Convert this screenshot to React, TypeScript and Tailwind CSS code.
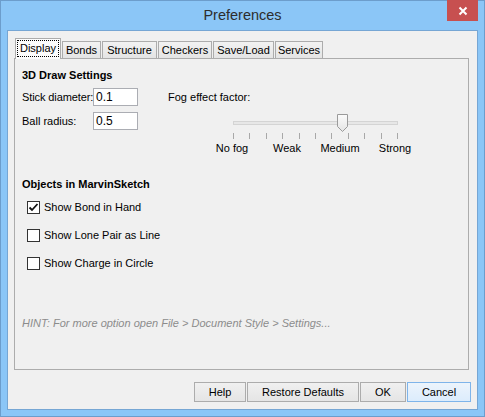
import React from 'react';

const font = { fontFamily: '"Liberation Sans", Arial, sans-serif' };

const tabs = [
  { label: 'Display', w: 'w-[46px]' },
  { label: 'Bonds', w: 'w-[39px]' },
  { label: 'Structure', w: 'w-[55px]' },
  { label: 'Checkers', w: 'w-[54px]' },
  { label: 'Save/Load', w: 'w-[61px]' },
  { label: 'Services', w: 'w-[48px]' },
];

const checks = [
  { label: 'Show Bond in Hand', on: true },
  { label: 'Show Lone Pair as Line', on: false },
  { label: 'Show Charge in Circle', on: false },
];

function FogSlider() {
  const ticks = Array.from({ length: 11 }, (_, i) => 33 + i * 16.4);
  return (
    <div className="relative ml-[32px] h-[50px] w-[220px]">
      <svg width="220" height="36" className="block">
        <rect x="33.5" y="15.5" width="164" height="3" fill="#e7e7e7" stroke="#d4d4d4" />
        {ticks.map((x) => (
          <line key={x} x1={Math.round(x) + 0.5} y1="27" x2={Math.round(x) + 0.5} y2="33" stroke="#a8a8a8" />
        ))}
        <defs>
          <linearGradient id="thumb" x1="0" y1="0" x2="0" y2="1">
            <stop offset="0" stopColor="#fbfbfb" />
            <stop offset="1" stopColor="#e4e4e4" />
          </linearGradient>
        </defs>
        <path d="M137.5 8.5 H147.5 V20.5 L142.5 25.5 L137.5 20.5 Z" fill="url(#thumb)" stroke="#9a9a9a" />
      </svg>
      <div className="absolute left-0 top-[35px] h-[14px] w-full text-[11px] leading-[14px] text-black">
        <span className="absolute -translate-x-1/2" style={{ left: 32 }}>No fog</span>
        <span className="absolute -translate-x-1/2" style={{ left: 87 }}>Weak</span>
        <span className="absolute -translate-x-1/2" style={{ left: 140 }}>Medium</span>
        <span className="absolute -translate-x-1/2" style={{ left: 195 }}>Strong</span>
      </div>
    </div>
  );
}

function Checkbox({ on }: { on: boolean }) {
  return (
    <span className="flex h-[13px] w-[13px] items-center justify-center border border-[#333333] bg-white">
      {on && (
        <svg width="11" height="11" viewBox="0 0 11 11">
          <path d="M1.5 5.5 L4 8 L9.5 2" fill="none" stroke="#111" strokeWidth="1.8" />
        </svg>
      )}
    </span>
  );
}

export default function App() {
  return (
    <div
      className="flex h-[417px] w-[485px] flex-col border border-[#6c9dcc] bg-[#8bc6f7] px-[6px] pb-[6px]"
      style={font}
    >
      <div className="relative h-[29px] shrink-0">
        <div className="pt-[5px] text-center text-[14.5px] leading-[18px] text-[#2d2d2d]">Preferences</div>
        <div className="absolute right-0 top-[-1px] flex h-[21px] w-[31px] items-center justify-center bg-[#c75050]">
          <svg width="10" height="10" viewBox="0 0 10 10">
            <path d="M1.5 1.5 L8.5 8.5 M8.5 1.5 L1.5 8.5" stroke="#fff" strokeWidth="2" />
          </svg>
        </div>
      </div>

      <div className="flex flex-1 flex-col border border-[#76a6d4] bg-[#f0f0f0] pl-[6px] pr-[8px] pt-[7px]">
        <div className="flex h-[20px] items-end gap-px pl-px text-[11px] text-black">
          {tabs.map((t, i) =>
            i === 0 ? (
              <div
                key={t.label}
                className={`${t.w} relative z-10 -mb-px flex h-[21px] items-center justify-center border border-b-0 border-[#acacac] bg-[#fcfcfc] pb-[1px]`}
              >
                <span className="border border-dotted border-black px-[2px] leading-[15px]">{t.label}</span>
              </div>
            ) : (
              <div
                key={t.label}
                className={`${t.w} flex h-[17px] items-center justify-center border border-b-0 border-[#acacac] bg-gradient-to-b from-[#f2f2f2] to-[#e4e4e4] leading-[15px]`}
              >
                {t.label}
              </div>
            ),
          )}
        </div>

        <div className="h-[312px] border border-[#acacac] bg-[#f0f0f0] px-[7px] pt-[9px] text-[11px] text-black">
          <div className="h-[14px] font-bold leading-[14px]">3D Draw Settings</div>

          <div className="mt-[6px] flex">
            <div className="flex flex-col gap-[6px]">
              <div className="flex h-[18px] items-center">
                <span className="w-[71px] shrink-0 whitespace-nowrap tracking-[-0.1px]">Stick diameter:</span>
                <span className="flex h-[18px] w-[45px] items-center border border-[#abadb3] bg-white pl-[2px] text-[12px]">0.1</span>
              </div>
              <div className="flex h-[18px] items-center">
                <span className="w-[71px] shrink-0 whitespace-nowrap">Ball radius:</span>
                <span className="flex h-[18px] w-[45px] items-center border border-[#abadb3] bg-white pl-[2px] text-[12px]">0.5</span>
              </div>
            </div>
            <div className="ml-[30px] flex flex-col">
              <div className="flex h-[18px] items-center whitespace-nowrap">Fog effect factor:</div>
              <FogSlider />
            </div>
          </div>

          <div className="mt-[21px] h-[14px] font-bold leading-[14px]">Objects in MarvinSketch</div>
          <div className="mt-[2px] flex flex-col">
            {checks.map((c) => (
              <div key={c.label} className="flex h-[28px] items-center gap-[4px] pl-[5px]">
                <Checkbox on={c.on} />
                <span>{c.label}</span>
              </div>
            ))}
          </div>

          <div className="mt-[39px] h-[14px] italic leading-[14px] text-[#8c8c8c]">
            HINT: For more option open File &gt; Document Style &gt; Settings...
          </div>
        </div>

        <div className="-mr-[2px] mt-[12px] flex justify-end gap-px text-[11px] text-black">
          <button className="h-[20px] w-[52px] border border-[#acacac] bg-gradient-to-b from-[#f0f0f0] to-[#e5e5e5]">Help</button>
          <button className="h-[20px] w-[112px] border border-[#acacac] bg-gradient-to-b from-[#f0f0f0] to-[#e5e5e5]">Restore Defaults</button>
          <button className="h-[20px] w-[46px] border border-[#acacac] bg-gradient-to-b from-[#f0f0f0] to-[#e5e5e5]">OK</button>
          <button className="h-[20px] w-[64px] border border-[#7eb4ea] bg-gradient-to-b from-[#ecf4fc] to-[#dcecfc]">Cancel</button>
        </div>
      </div>
    </div>
  );
}
